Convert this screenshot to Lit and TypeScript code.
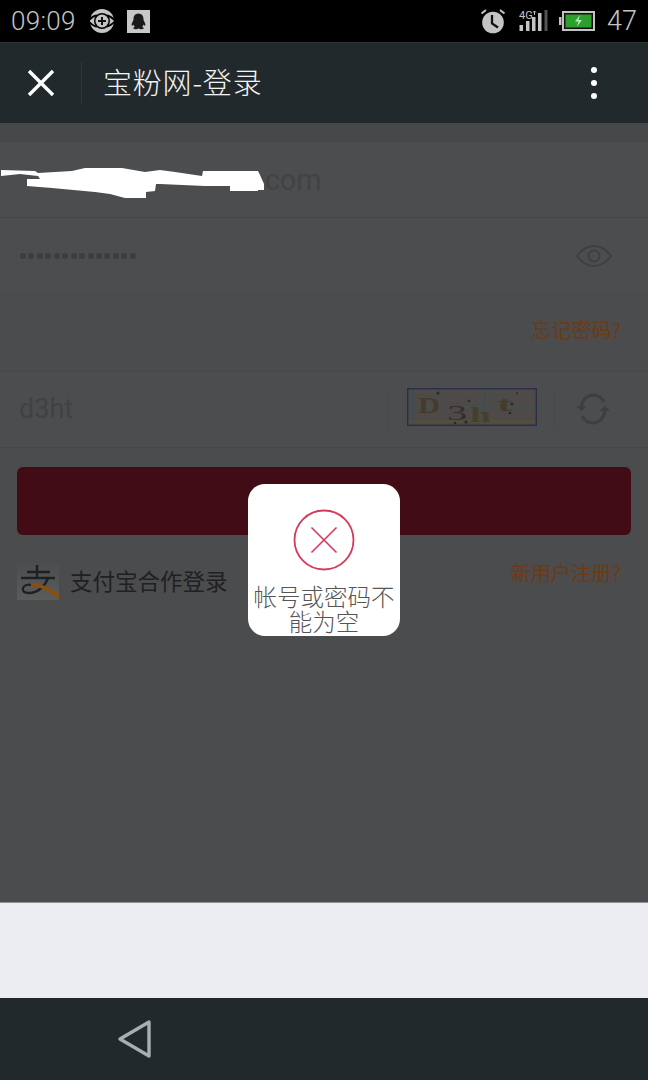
import { LitElement, html, css, unsafeCSS } from "lit";
import { customElement } from "lit/decorators.js";

const CJK = unsafeCSS(`"Noto Sans CJK SC", "Noto Sans", sans-serif`);

@customElement("app-root")
export class AppRoot extends LitElement {
  static styles = css`
    :host { display: block; position: relative; width: 648px; height: 1080px; overflow: hidden; font-family: ${CJK}; background: #4b4c4e; }
    .page { display: flex; flex-direction: column; height: 1080px; }
    .status { height: 42px; flex: none; background: #000; display: flex; align-items: center; padding: 0 11px; color: #c4c4c4; box-sizing: border-box; }
    .time { font: 300 26px Roboto, sans-serif; letter-spacing: 0.3px; width: 77px; }
    .status svg { display: block; flex: none; }
    .sync { margin-left: 1px; }
    .qq { margin-left: 12px; }
    .spacer { flex: 1; }
    .signal { margin-left: 13px; }
    .battery { margin-left: 10px; }
    .num { font: 300 27px Roboto, sans-serif; margin-left: 12px; }
    .nav { height: 81px; flex: none; background: #22292c; display: flex; align-items: center; box-sizing: border-box; border-top: 1px solid #2c3134; }
    .close { width: 82px; flex: none; border-right: 1px solid #2f3639; box-sizing: border-box; display: flex; align-items: center; padding-left: 27px; height: 42px; }
    .title { margin-left: 21px; padding-bottom: 4px; color: #f2f3f3; font-size: 29px; font-weight: 300; line-height: 40px; letter-spacing: 0.8px; flex: 1; }
    .more { width: 8px; margin-right: 50px; display: flex; flex-direction: column; gap: 7px; align-items: center; }
    .more i { width: 6px; height: 6px; border-radius: 50%; background: #fff; display: block; }
    .content { flex: 1; background: #4b4c4e; padding-top: 18px; display: flex; flex-direction: column; background-image: linear-gradient(#47484a 18px, transparent 18px); }
    .row { height: 76px; flex: none; box-sizing: border-box; border-top: 1px solid #444547; display: flex; align-items: center; background: #4c4d4f; }
    .email { color: #424345; font: 400 29px Roboto, sans-serif; padding-left: 257px; }
    .pw { height: 75px; padding: 2px 36px 0 20px; justify-content: space-between; }
    .dots { display: flex; gap: 2.45px; }
    .dots i { width: 6px; height: 6px; border-radius: 50%; background: #3c3d3f; display: block; }
    .forgot { height: 79px; background: #4b4c4e; justify-content: flex-end; padding: 0 27px 6px 0; color: #6e3a13; font-size: 20px; border-top-color: #48494b; }
    .captcha { height: 77px; padding: 0 36px 2px 19px; border-bottom: 1px solid #47484a; border-top-color: #474849; }
    .captcha .ph { color: #414244; font: 400 27px Roboto, sans-serif; width: 368px; }
    .sep { width: 1px; height: 36px; background: #47484a; flex: none; }
    .cap-img { width: 130px; height: 38px; flex: none; margin: 0 17px 4px 19px; box-sizing: border-box; display: block; }
    .refresh { margin-left: 20px; display: block; flex: none; }
    .btn { height: 68px; margin: 19px 17px 0; background: #420c17; border-radius: 6px; flex: none; }
    .links { display: flex; justify-content: space-between; padding: 28px 27px 0 17px; }
    .ali { display: flex; align-items: flex-start; gap: 11px; color: #1f2022; font-size: 22.5px; line-height: 34px; }
    .ali svg { display: block; flex: none; }
    .reg { color: #6e3a13; font-size: 20.2px; line-height: 26px; margin-top: -3px; }
    .blank { height: 96px; flex: none; background: #ecedf2; border-top: 1px solid #8f9092; box-sizing: border-box; }
    .bar { height: 82px; flex: none; background: #22292c; padding: 21px 0 0 117px; box-sizing: border-box; }
    .mask { position: absolute; left: 0; top: 165px; display: block; }
    .toast { position: absolute; left: 248px; top: 484px; width: 152px; height: 152px; border-radius: 17px; background: #fff; box-sizing: border-box; padding-top: 25px; text-align: center; color: #555; font-size: 23.5px; line-height: 25px; font-weight: 300; }
    .toast svg { display: block; margin: 0 auto 13px; }
  `;

  render() {
    return html`
      <div class="page">
        <div class="status">
          <span class="time">09:09</span>
          <svg class="sync" width="26" height="26" viewBox="0 0 26 26" fill="none">
            <circle cx="13" cy="13" r="12" fill="#c4c4c4"/>
            <path d="M0 12c3-3 6-4.500 8-4.500M18 7.500c3 .5 5 2 8 5M0 14c3 3 6 4.500 8 4.500M18 18.500c3-.5 5-2 8-5" stroke="#000" stroke-width="1.800"/>
            <circle cx="13" cy="13" r="8" fill="#000"/>
            <circle cx="13" cy="13" r="6.500" fill="#c4c4c4"/>
            <path d="M13 9v8M9 13h8" stroke="#111" stroke-width="2"/>
          </svg>
          <svg class="qq" width="23" height="23" viewBox="0 0 23 23">
            <rect width="23" height="23" fill="#c8c8c8"/>
            <path d="M11.500 3.500c3.500 0 5 2.800 5 5.600 0 1 .2 1.600 1 3 .9 1.600 1.200 3.400.5 3.600-.6.2-1.200-.8-1.500-1.200-.2 1.200-.8 2-1.400 2.600 1 .3 1.800.8 1.600 1.500-.3.7-2.700.8-3.700.3-.6-.3-.9-.5-1.500-.5s-.9.2-1.500.5c-1 .5-3.400.4-3.700-.3-.2-.7.6-1.200 1.600-1.500-.6-.6-1.200-1.400-1.400-2.600-.3.4-.9 1.400-1.500 1.200-.7-.2-.4-2 .5-3.600.8-1.400 1-2 1-3 0-2.800 1.500-5.600 5-5.600z" fill="#1a1a1a"/>
          </svg>
          <span class="spacer"></span>
          <svg class="alarm" width="26" height="26" viewBox="0 0 26 26">
            <path d="M1.500 5.500L6 2M24.500 5.500L20 2" stroke="#c4c4c4" stroke-width="2" fill="none"/>
            <circle cx="13" cy="14.500" r="10.800" fill="#c4c4c4"/>
            <path d="M12 7v8.500l6 4" stroke="#111" stroke-width="2.300" fill="none"/>
          </svg>
          <svg class="signal" width="30" height="22" viewBox="0 0 30 22">
            <text x="0" y="9" font-family="Roboto, sans-serif" font-size="11" fill="#c4c4c4">4G</text>
            <path d="M15.500 5V1M14 2.500L15.500 1L17 2.500" stroke="#c4c4c4" stroke-width="1" fill="none"/>
            <rect x="0.500" y="15" width="3.500" height="6" fill="#c4c4c4"/>
            <rect x="7" y="11" width="3.500" height="10" fill="#c4c4c4"/>
            <rect x="13" y="7" width="3.500" height="14" fill="#c4c4c4"/>
            <rect x="19" y="3" width="3.500" height="18" fill="#c4c4c4"/>
            <rect x="25.500" y="0" width="3" height="21" fill="#555"/>
          </svg>
          <svg class="battery" width="36" height="22" viewBox="0 0 36 22">
            <rect x="0" y="7" width="2.500" height="8" fill="#c4c4c4"/>
            <rect x="4" y="2" width="31" height="18" fill="#111" stroke="#c4c4c4" stroke-width="2"/>
            <rect x="6.500" y="4.500" width="26" height="13" fill="#2ca02c"/>
            <path d="M21 5l-5 6.500h3.500l-1.500 5 5-6.500h-3.500z" fill="#b8e6b8"/>
          </svg>
          <span class="num">47</span>
        </div>

        <div class="nav">
          <div class="close">
            <svg width="28" height="28" viewBox="0 0 28 28"><path d="M2 2l24 24M26 2L2 26" stroke="#fff" stroke-width="3.400"/></svg>
          </div>
          <div class="title">宝粉网-登录</div>
          <div class="more"><i></i><i></i><i></i></div>
        </div>

        <div class="content">
          <div class="row"><span class="email">.com</span></div>
          <div class="row pw">
            <div class="dots">${Array.from({ length: 14 }, () => html`<i></i>`)}</div>
            <svg width="36" height="24" viewBox="0 0 36 24" fill="none" stroke="#3e3f41" stroke-width="2">
              <path d="M1 12C6 5 12 2 18 2s12 3 17 10c-5 7-11 10-17 10S6 19 1 12z"/>
              <circle cx="18" cy="12" r="5.500"/>
            </svg>
          </div>
          <div class="row forgot">忘记密码?</div>
          <div class="row captcha">
            <span class="ph">d3ht</span>
            <span class="sep"></span>
            <svg class="cap-img" viewBox="0 0 130 38">
              <rect width="130" height="38" fill="#4f4a4a"/>
              <path d="M0 4h130" stroke="#4a5440" stroke-width="1"/>
              <path d="M0 19h130" stroke="#3d5552" stroke-width="1.500"/>
              <path d="M0 33.500h130" stroke="#55532c" stroke-width="2"/>
              <path d="M6 0v38M78 0v38" stroke="#36505a" stroke-width="1.500"/>
              <text x="11" y="25" font-family="Liberation Serif, serif" font-weight="700" font-size="24" textLength="22" lengthAdjust="spacingAndGlyphs" fill="#463a2c">D</text>
              <text x="40" y="32" font-family="Liberation Serif, serif" font-size="22" textLength="20" lengthAdjust="spacingAndGlyphs" fill="#33302f">3</text>
              <text x="63" y="34" font-family="Liberation Serif, serif" font-weight="700" font-size="22" textLength="21" lengthAdjust="spacingAndGlyphs" fill="#44402c">h</text>
              <text x="90" y="23" font-family="Liberation Serif, serif" font-weight="700" font-size="22" textLength="15" lengthAdjust="spacingAndGlyphs" fill="#463a2c">t</text>
              <g fill="#2a2a2c"><circle cx="31" cy="5" r="1.500"/><circle cx="62" cy="13" r="1.300"/><circle cx="57" cy="29" r="1.300"/><circle cx="59" cy="34" r="1.600"/><circle cx="105" cy="16" r="1.500"/><circle cx="103" cy="25" r="1.300"/><circle cx="48" cy="35" r="1.300"/><circle cx="110" cy="5" r="1"/></g>
              <rect x="0.700" y="0.700" width="128.600" height="36.600" fill="none" stroke="#2c2d48" stroke-width="1.400"/>
            </svg>
            <span class="sep"></span>
            <svg class="refresh" width="36" height="34" viewBox="0 0 36 34" fill="none" stroke="#3e3f41" stroke-width="3">
              <path d="M6 15C7 8 12 3 18 3c5 0 9 3 11 7M30 19c-1 7-6 12-12 12-5 0-9-3-11-7"/>
              <path d="M1 14l5.500 5 5-5z" fill="#3e3f41" stroke="none"/>
              <path d="M24 19l6-5 5 5z" fill="#3e3f41" stroke="none"/>
            </svg>
          </div>
          <div class="btn"></div>
          <div class="links">
            <div class="ali">
              <svg width="42" height="37" viewBox="0 0 42 37">
                <defs><linearGradient id="a" x1="0" y1="0" x2="0" y2="1"><stop offset="0" stop-color="#4c4d4f"/><stop offset="1" stop-color="#5c5c5c"/></linearGradient></defs>
                <rect width="42" height="37" fill="url(#a)"/>
                <path d="M10 9h23M20 2v13M4 15h34" stroke="#1d2124" stroke-width="2.500" fill="none"/>
                <path d="M31 15c-3 8-10 15-19 15-5 0-7-2-6-5 1-3 5-4 9-3" stroke="#1d2124" stroke-width="2.300" fill="none"/>
                <path d="M14 20c10-1 20 6 28 11l0 5C32 29 24 23 14 24z" fill="#8a4f10"/>
              </svg>
              <span>支付宝合作登录</span>
            </div>
            <div class="reg">新用户注册?</div>
          </div>
        </div>

        <div class="blank"></div>
        <div class="bar">
          <svg width="36" height="40" viewBox="0 0 36 40" fill="none">
            <path d="M32 3v34L3 20z" stroke="#a9afb1" stroke-width="3.400" stroke-linejoin="round"/>
          </svg>
        </div>
      </div>

      <svg class="mask" width="266" height="36" viewBox="0 165 266 36">
        <path d="M1 170L35 171L38 173L72 171L85 168L122 168L145 172L160 170L175 172L202 176L203 171L258 171L260 175L264 184L264 190L258 190L258 191L230 191L230 186L205 186L160 184L156 184L155 191L146 192L146 198L125 198L110 194L95 192L52 188L27 186L27 179L40 179L38 176L20 174L1 176z" fill="#fff"/>
      </svg>

      <div class="toast">
        <svg width="62" height="62" viewBox="0 0 62 62" fill="none" stroke="#d6395a" stroke-width="1.800">
          <circle cx="31" cy="31" r="29.500"/>
          <path d="M18.500 18.500l25 25M43.500 18.500l-25 25" stroke-width="1.600"/>
        </svg>
        帐号或密码不能为空
      </div>
    `;
  }
}
